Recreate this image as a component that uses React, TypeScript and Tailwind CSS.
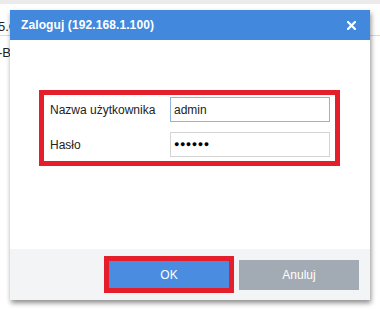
export default function App() {
  return (
    <div
      className="relative w-[380px] h-[310px] overflow-hidden bg-white text-[#222]"
      style={{ fontFamily: '"Liberation Sans", Arial, sans-serif' }}
    >
      {/* page behind the dialog */}
      <div className="h-[4px] bg-[#ebebeb]" />
      <div className="relative h-[32px] border-b border-[#d9d9d9]">
        <span className="absolute left-[-2px] top-[16px] text-[13px] leading-[14px]">5.C</span>
        <span className="absolute left-[240px] top-[4px] text-[13px] leading-[14px]">Niezalogowany</span>
      </div>
      <div className="relative h-[30px]">
        <span className="absolute left-[-2px] top-[10px] text-[13px] leading-[14px]">-B</span>
      </div>

      {/* login dialog */}
      <div className="absolute left-[10px] top-[10px] w-[360px] h-[290px] flex flex-col bg-white shadow-[1px_3px_5px_rgba(0,0,0,0.45)]">
        <div className="h-[30px] bg-[#4289dd] flex items-center justify-between pl-[11px] pr-[14px]">
          <span className="text-white font-bold text-[12px] tracking-[0.1px]">Zaloguj (192.168.1.100)</span>
          <svg width="9" height="9" viewBox="0 0 9 9">
            <path d="M1 1 L8 8 M8 1 L1 8" stroke="white" strokeWidth="2.2" strokeLinecap="square" />
          </svg>
        </div>

        <div className="flex-1 pt-[50px] pl-[29px]">
          <div className="w-[301px] border-[5px] border-[#e41e2b] pl-[6px] pr-[5px] pt-[2px] pb-[4px] flex flex-col gap-[10px]">
            <div className="flex items-center justify-between">
              <span className="text-[12px]">Nazwa użytkownika</span>
              <div className="w-[160px] h-[25px] border border-[#8fb4dc] flex items-center pl-[3px] text-[12px]">
                admin
              </div>
            </div>
            <div className="flex items-center justify-between">
              <span className="text-[12px]">Hasło</span>
              <div className="w-[160px] h-[25px] border border-[#d4d4d4] flex items-center pl-[3px] text-[9px] tracking-[0.5px] text-black">
                ●●●●●●
              </div>
            </div>
          </div>
        </div>

        <div className="h-[51px] bg-[#f2f4f6] flex items-start justify-end gap-[5px] pt-[7px] pr-[11px]">
          <div className="border-[5px] border-[#e41e2b]">
            <button className="w-[120px] h-[27px] bg-[#4a8de0] text-white text-[12px]">OK</button>
          </div>
          <button className="mt-[4px] w-[120px] h-[30px] bg-[#a2aab4] text-white text-[12px]">Anuluj</button>
        </div>
      </div>
    </div>
  );
}
